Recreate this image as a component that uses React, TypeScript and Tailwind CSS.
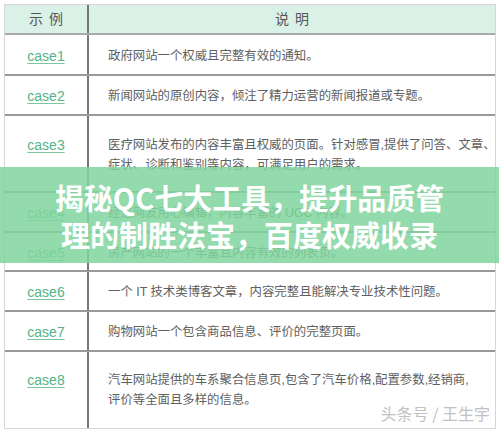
import React from "react";

interface Row {
  name: string;
  lines: string[];
  height: string;
  pad: string;
}

const rows: Row[] = [
  { name: "case1", lines: ["政府网站一个权威且完整有效的通知。"], height: "h-[41px]", pad: "pt-[11px]" },
  { name: "case2", lines: ["新闻网站的原创内容，倾注了精力运营的新闻报道或专题。"], height: "h-[40px]", pad: "pt-[10px]" },
  {
    name: "case3",
    lines: ["医疗网站发布的内容丰富且权威的页面。针对感冒,提供了问答、文章、", "症状、诊断和鉴别等内容，可满足用户的需求。"],
    height: "h-[77px]",
    pad: "pt-[19px]",
  },
  { name: "case4", lines: ["经过网友用心编辑，内容丰富的 UGC 内容。"], height: "h-[40px]", pad: "pt-[10px]" },
  { name: "case5", lines: ["房产网站的一个丰富且内容有效的列表页。"], height: "h-[39px]", pad: "pt-[10px]" },
  { name: "case6", lines: ["一个 IT 技术类博客文章，内容完整且能解决专业技术性问题。"], height: "h-[40px]", pad: "pt-[10px]" },
  { name: "case7", lines: ["购物网站一个包含商品信息、评价的完整页面。"], height: "h-[40px]", pad: "pt-[10px]" },
  {
    name: "case8",
    lines: ["汽车网站提供的车系聚合信息页,包含了汽车价格,配置参数,经销商,", "评价等全面且多样的信息。"],
    height: "h-[76px]",
    pad: "pt-[18px]",
  },
];

const cjk = "font-['Liberation_Sans','Noto_Sans_CJK_SC',sans-serif]";

export default function App() {
  return (
    <div className={`relative w-[499px] h-[433px] bg-white overflow-hidden ${cjk}`}>
      <div className="pt-[4px] px-[4px]">
        <div className="w-[492px] border border-[#d6d6d6]">
          {/* header */}
          <div className="grid grid-cols-[84px_1fr] h-[30px] bg-[#d9f1e6] border-b-2 border-[#a9a9a9] text-[14px] text-[#555]">
            <div className="flex items-center justify-center tracking-[6px] pl-[6px] border-r-2 border-[#777]">示例</div>
            <div className="flex items-center justify-center tracking-[6px] pl-[6px]">说明</div>
          </div>
          {rows.map((r, i) => (
            <div
              key={r.name}
              className={`grid grid-cols-[84px_1fr] ${r.height} ${
                i < rows.length - 1 ? "border-b-2 border-[#9a9a9a]" : ""
              }`}
            >
              <div className={`flex justify-center border-r-2 border-[#777] ${r.pad}`}>
                <span className="text-[14px] leading-[20px] text-[#55b487] underline underline-offset-2 decoration-[#7cc6a0]">
                  {r.name}
                </span>
              </div>
              <div className={`pl-[19px] ${r.pad} text-[12.4px] leading-[20px] text-[#606060]`}>
                {r.lines.map((l) => (
                  <div key={l} className="whitespace-nowrap">
                    {l}
                  </div>
                ))}
              </div>
            </div>
          ))}
        </div>
      </div>

      {/* title band */}
      <div className="absolute left-0 right-0 top-[167px] h-[96px] bg-[#80d59d]/85 flex flex-col items-center justify-center pt-[2px]">
        <div className="text-white font-bold text-[29px] leading-[37px] font-['Noto_Sans_CJK_SC',sans-serif] text-center">
          <div>揭秘QC七大工具，提升品质管</div>
          <div>理的制胜法宝，百度权威收录</div>
        </div>
      </div>

      {/* watermark */}
      <div className="absolute right-[9px] top-[402px] text-[16px] leading-[22px] text-[#c2c2c2] font-['Noto_Sans_CJK_SC',sans-serif]">
        头条号 / 王生宇
      </div>
    </div>
  );
}
